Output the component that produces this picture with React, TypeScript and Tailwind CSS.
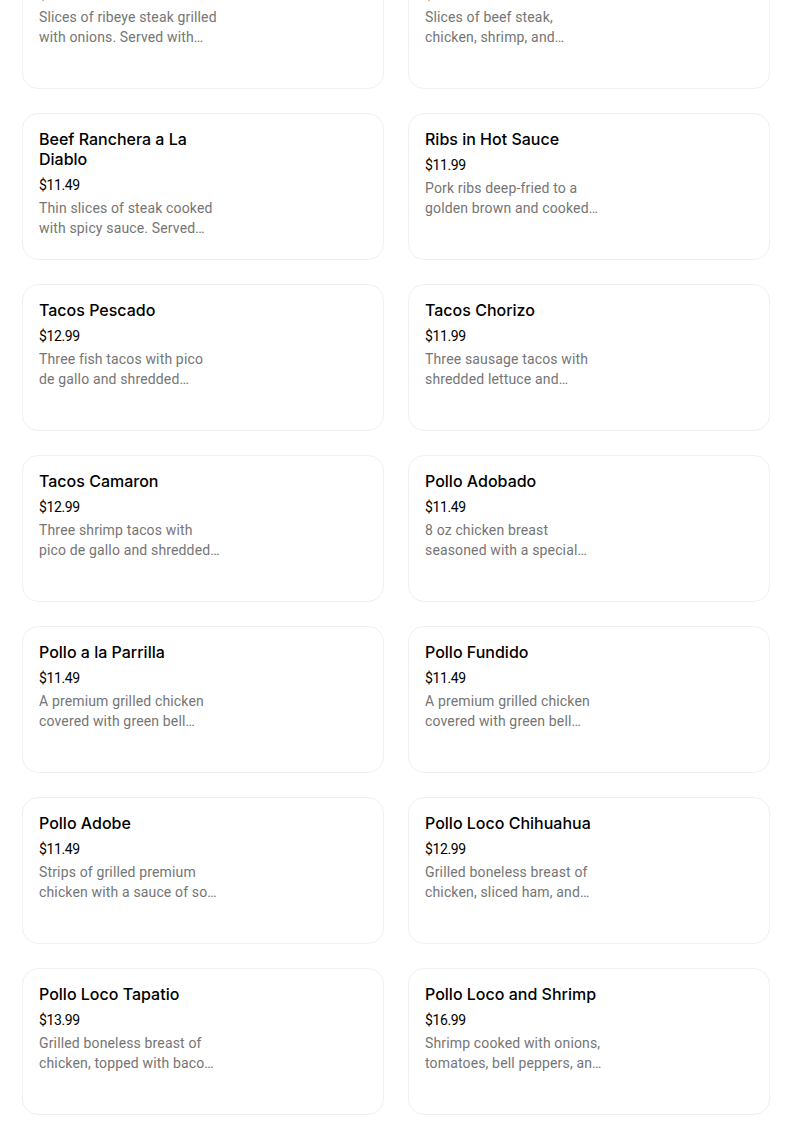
import React from "react";

type Item = { name: string; price: string; desc: string };

const items: Item[] = [
  { name: "Carne Asada", price: "$12.99", desc: "Slices of ribeye steak grilled with onions. Served with rice, beans and tortillas." },
  { name: "Fajitas Mixtas", price: "$14.99", desc: "Slices of beef steak, chicken, shrimp, and vegetables grilled together." },
  { name: "Beef Ranchera a La Diablo", price: "$11.49", desc: "Thin slices of steak cooked with spicy sauce. Served with rice and beans." },
  { name: "Ribs in Hot Sauce", price: "$11.99", desc: "Pork ribs deep-fried to a golden brown and cooked with hot sauce." },
  { name: "Tacos Pescado", price: "$12.99", desc: "Three fish tacos with pico de gallo and shredded cabbage." },
  { name: "Tacos Chorizo", price: "$11.99", desc: "Three sausage tacos with shredded lettuce and tomatoes." },
  { name: "Tacos Camaron", price: "$12.99", desc: "Three shrimp tacos with pico de gallo and shredded cabbage." },
  { name: "Pollo Adobado", price: "$11.49", desc: "8 oz chicken breast seasoned with a special adobo sauce." },
  { name: "Pollo a la Parrilla", price: "$11.49", desc: "A premium grilled chicken covered with green bell peppers and onions." },
  { name: "Pollo Fundido", price: "$11.49", desc: "A premium grilled chicken covered with green bell peppers and melted cheese." },
  { name: "Pollo Adobe", price: "$11.49", desc: "Strips of grilled premium chicken with a sauce of sour cream and chipotle." },
  { name: "Pollo Loco Chihuahua", price: "$12.99", desc: "Grilled boneless breast of chicken, sliced ham, and melted cheese." },
  { name: "Pollo Loco Tapatio", price: "$13.99", desc: "Grilled boneless breast of chicken, topped with bacon and cheese." },
  { name: "Pollo Loco and Shrimp", price: "$16.99", desc: "Shrimp cooked with onions, tomatoes, bell peppers, and mushrooms." },
];

function MenuCard({ item }: { item: Item }) {
  return (
    <div className="h-[147px] rounded-2xl border border-[#f0f0f0] bg-white flex">
      <div className="w-[198px] pl-[16px] pt-[15px]">
        <h3 className="font-['Inter',sans-serif] text-[16px] leading-[20px] font-medium text-black">{item.name}</h3>
        <p className="mt-[6px] text-[14px] leading-[20px] tracking-[-0.4px] text-black">{item.price}</p>
        <p className="mt-[3px] text-[14px] leading-[20px] tracking-[0.15px] text-[#757575] line-clamp-2">{item.desc}</p>
      </div>
    </div>
  );
}

export default function App() {
  return (
    <div className="min-h-screen bg-white overflow-hidden font-['Roboto','Noto_Sans',sans-serif]">
      {/* menu grid, page is scrolled down a bit */}
      <div className="-mt-[58px] pl-[22px] grid grid-cols-[362px_362px] gap-x-[24px] gap-y-[24px]">
        {items.map((item) => (
          <MenuCard key={item.name} item={item} />
        ))}
      </div>
    </div>
  );
}
